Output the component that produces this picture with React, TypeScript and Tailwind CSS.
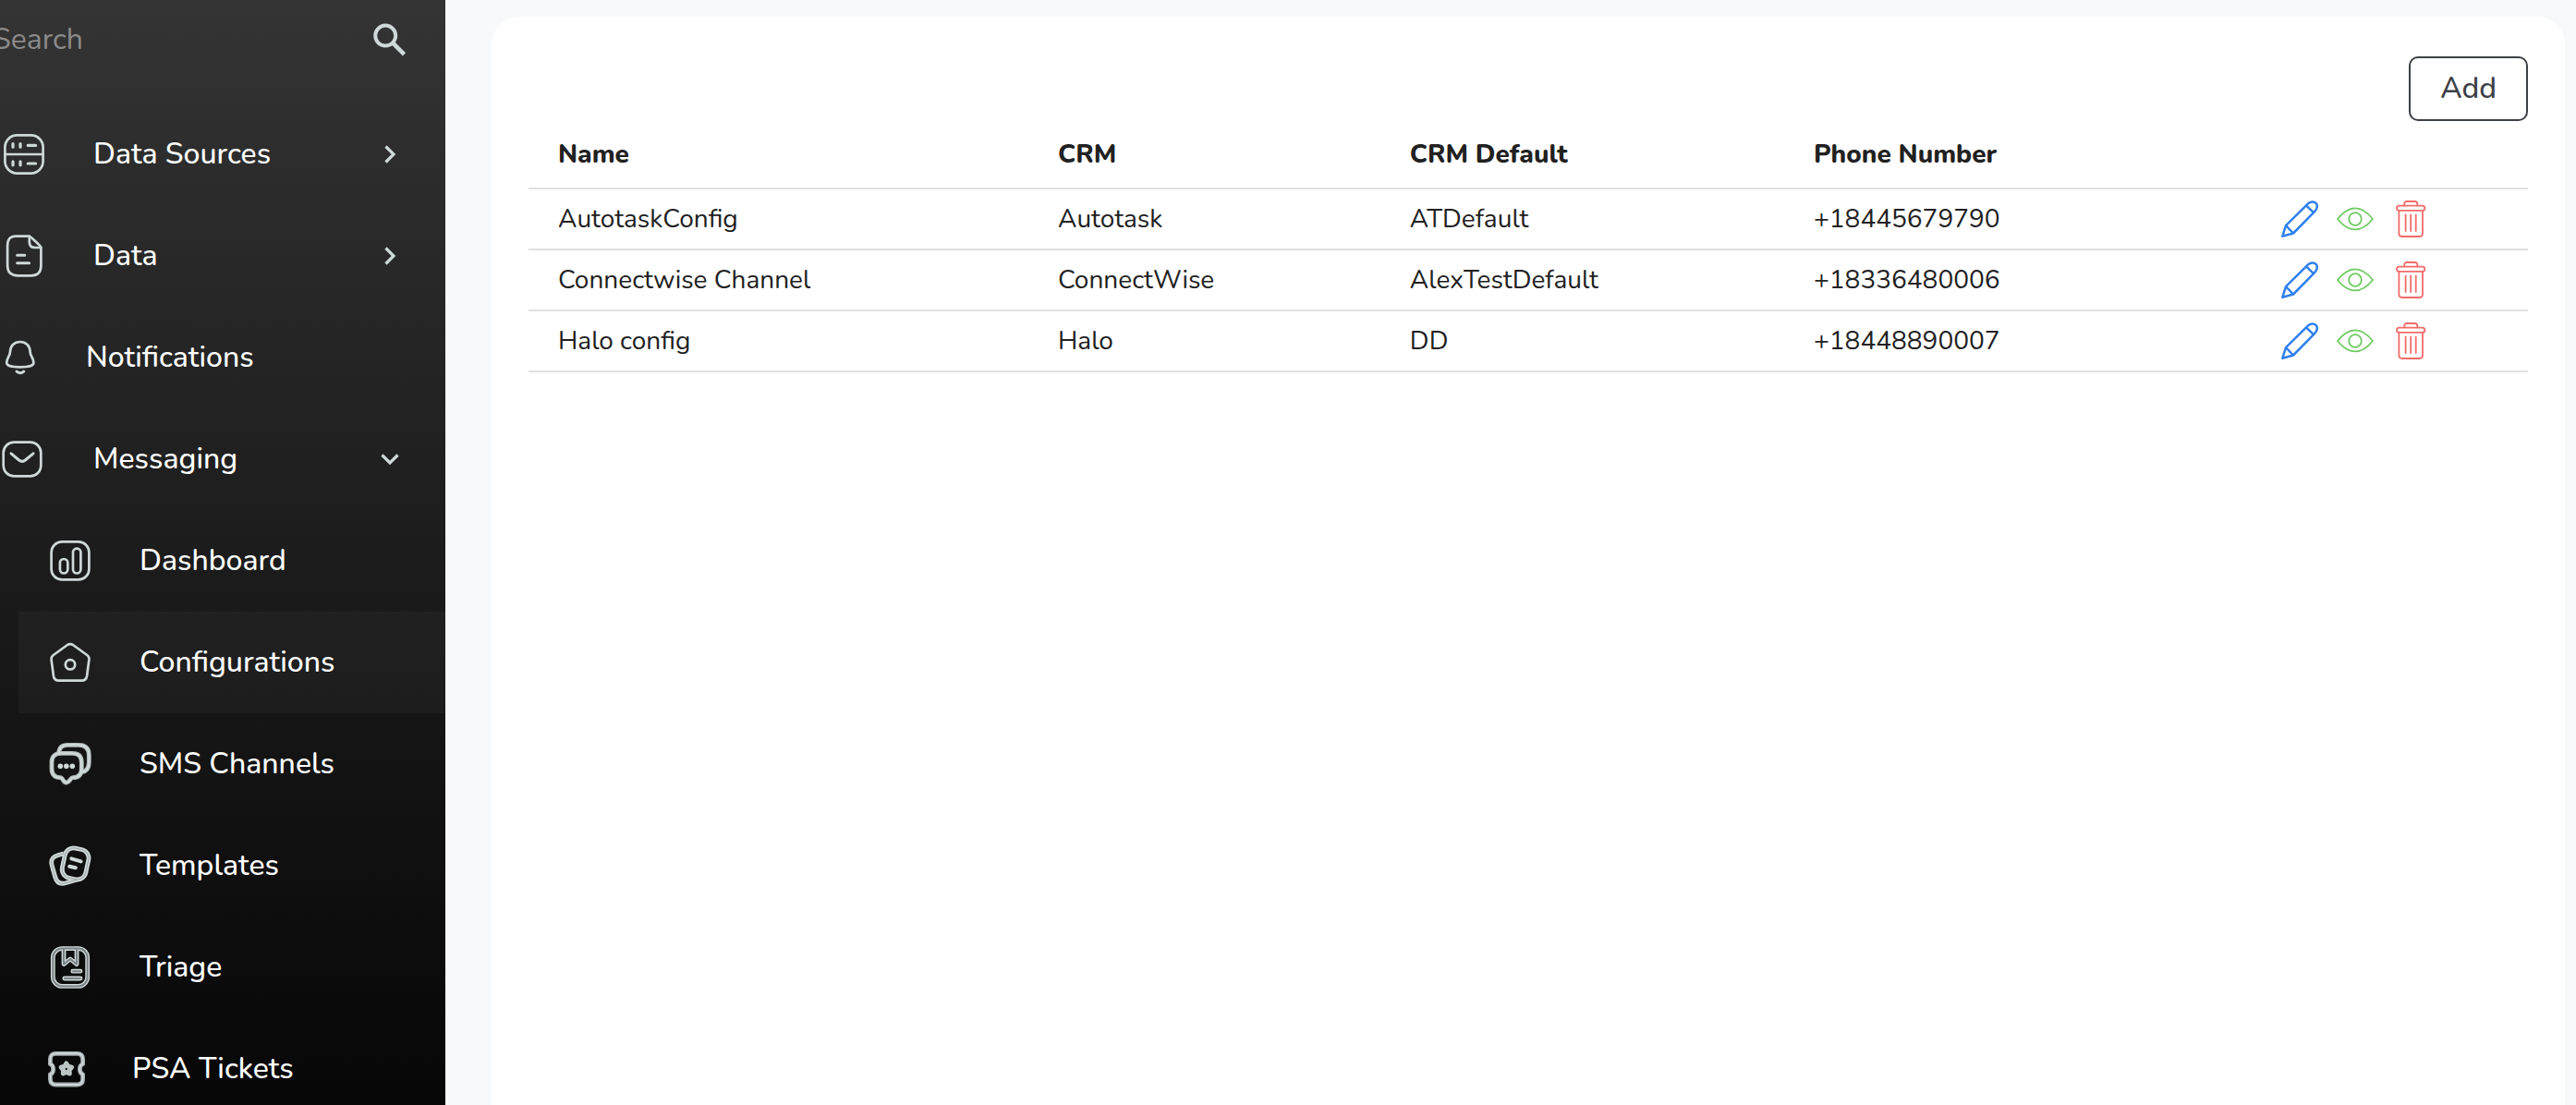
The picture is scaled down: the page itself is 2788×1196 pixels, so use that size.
import type { ReactNode } from "react";

const LIGHT = "#cfd8d8";

type IconProps = { size?: 40 | 48; children: ReactNode };

function NavIcon({ size = 48, children }: IconProps) {
  return (
    <svg
      width={size}
      height={size}
      viewBox={`0 0 ${size} ${size}`}
      fill="none"
      stroke={LIGHT}
      strokeWidth="2.7"
      strokeLinecap="round"
      strokeLinejoin="round"
      className="shrink-0"
      aria-hidden="true"
    >
      {children}
    </svg>
  );
}

/* A thick outline with a differently toned line running along its middle. */
function Inlaid({ width, core, tone, edge, children }: { width: number; core: number; tone: string; edge: string; children: ReactNode }) {
  return (
    <>
      <g strokeWidth={width} stroke={edge}>{children}</g>
      <g strokeWidth={core} stroke={tone}>{children}</g>
    </>
  );
}

const DataSourcesIcon = () => (
  <NavIcon>
    <rect x="3.4" y="3.4" width="41.2" height="41.2" rx="13" />
    <path d="M3.4 24H44.6" />
    <path strokeWidth="3.2" d="M12 12.6V16.2M20 12.6V16.2M28.2 14.4H36.6M12 31.9V35.8M20 31.9V35.8M28.2 34H36.6" />
  </NavIcon>
);

const DataIcon = () => (
  <NavIcon>
    <path d="M15 2.6H29.6C30.8 2.6 42.4 13.6 42.4 14.8V34.5C42.4 41.6 38.6 45.3 31.5 45.3H17C9.9 45.3 6.1 41.6 6.1 34.5V13C6.1 6 9 2.6 15 2.6Z" />
    <path d="M29.8 2.9V9C29.8 13 31.8 15 36 15H42.2" />
    <path strokeWidth="3" d="M16.6 23.2H24.8M16.6 31.8H29.6" />
  </NavIcon>
);

const BellIcon = () => (
  <NavIcon size={40}>
    <path d="M19.8 3C13.2 3 9.2 7.6 9 13.6C8.9 18.4 5.2 20.6 5.2 25.6C5.2 29.2 10 30.3 19.8 30.3S34.4 29.2 34.4 25.6C34.4 20.6 30.7 18.4 30.6 13.6C30.4 7.6 26.4 3 19.8 3Z" />
    <path strokeWidth="3" d="M16 35C18 37.2 21.800 37.2 23.8 35" />
  </NavIcon>
);

const MailIcon = () => (
  <NavIcon>
    <rect x="1.7" y="5.600" width="40.6" height="36.800" rx="11.5" />
    <path strokeWidth="3" d="M10 17.8L18.6 25C20.8 26.8 23.2 26.8 25.4 25L34 17.8" />
  </NavIcon>
);

const DashboardIcon = () => (
  <NavIcon>
    <rect x="3.6" y="3.4" width="40.800" height="41" rx="11.5" />
    <rect x="12.9" y="22" width="8.400" height="15.500" rx="4.200" />
    <rect x="27" y="10.600" width="8.400" height="26.900" rx="4.200" />
  </NavIcon>
);

const ConfigurationsIcon = () => (
  <NavIcon>
    <path d="M21 5Q24 3.1 27 5L42.2 16Q44.7 17.8 44.4 21L42.1 38.400Q41.2 43.6 36.400 43.6H11.6Q6.8 43.6 5.9 38.4L3.6 21Q3.3 17.8 5.8 16Z" />
    <circle cx="24" cy="26.300" r="5.200" />
  </NavIcon>
);

const SmsIcon = () => (
  <NavIcon>
    <Inlaid width={4.8} core={2.4} edge="#b2bbbb" tone={LIGHT}>
      <path strokeLinecap="butt" d="M11.6 12C12 6.2 15 3.3 21 3.3H33C40.5 3.3 44.3 7 44.3 14.5V22C44.3 28.500 42 31.8 36.6 32.6" />
      <path d="M14 12.4H26.5C33 12.4 36.3 15.8 36.3 22.2V29C36.3 35.3 33.2 38.7 27 38.7C24 38.7 23.4 44 19.800 44S16.2 38.7 13.2 38.7C7 38.7 4 35.3 4 29V22.2C4 15.8 7.5 12.4 14 12.4Z" />
    </Inlaid>
    <g fill={LIGHT} stroke="none">
      <circle cx="13.3" cy="26.3" r="2.8" />
      <circle cx="19.8" cy="26.3" r="2.8" />
      <circle cx="26.3" cy="26.3" r="2.8" />
    </g>
  </NavIcon>
);

const TemplatesIcon = () => (
  <NavIcon>
    <Inlaid width={4.8} core={1} edge={LIGHT} tone="#9ba3a5">
      <path strokeLinecap="butt" d="M17 10.9L10.5 12.8C4.5 14.6 2.6 18 4.2 23.8L7.8 36.5C9.5 42.4 13 44.4 19 42.8L31 39.3" />
      <rect x="16.6" y="5.4" width="26" height="33" rx="9.5" transform="rotate(12 29.6 21.9)" />
    </Inlaid>
    <path strokeWidth="4" d="M25.300 16.400L35.600 19.400M23.200 24.800L29.800 26.200" />
  </NavIcon>
);

const TriageIcon = () => (
  <NavIcon>
    <Inlaid width={4.8} core={2} edge={LIGHT} tone="#7c8386">
      <rect x="5.3" y="3.6" width="37.4" height="40.8" rx="10" />
      <path d="M17 4V20.6L24 15L31 20.6V4" />
      <path d="M26.8 28.2H35M17.8 36H35" />
    </Inlaid>
  </NavIcon>
);

const TicketIcon = () => (
  <NavIcon size={40}>
    <Inlaid width={4.8} core={2} edge="#a3abae" tone={LIGHT}>
      <path d="M2.4 14.8V9.5Q2.4 3.3 8.5 3.3H31.5Q37.6 3.3 37.6 9.5V14.8A4 5.6 0 0 0 37.6 25.8V31Q37.6 37 31.5 37H8.5Q2.4 37 2.4 31V25.8A4 5.6 0 0 0 2.4 14.8Z" />
    </Inlaid>
    <path strokeWidth="5" stroke="#bcc5c6" d="M19.8 14L21.800 17.200L25.500 18.100L23.100 21.100L23.300 24.900L19.800 23.500L16.300 24.900L16.500 21.100L14.100 18.100L17.800 17.200Z" />
  </NavIcon>
);

function SearchIcon() {
  return (
    <svg width="36" height="36" viewBox="0 0 36 36" fill="none" stroke={LIGHT} aria-hidden="true">
      <circle cx="13.2" cy="13.6" r="11" strokeWidth="4" />
      <path d="M21.8 22.2L33.5 33.9" strokeWidth="4.6" />
    </svg>
  );
}

function Chevron({ down }: { down?: boolean }) {
  return (
    <svg width="24" height="24" viewBox="0 0 24 24" fill="none" stroke={LIGHT} strokeWidth="3.2" aria-hidden="true">
      <path d={down ? "M3.5 7.5L12 16L20.5 7.5" : "M7.5 3.5L16 12L7.5 20.5"} />
    </svg>
  );
}

const PencilIcon = () => (
  <svg width="40" height="40" viewBox="0 0 40 40" fill="none" stroke="#2f80ed" strokeWidth="2.5" strokeLinejoin="round" aria-hidden="true">
    <path d="M1.3 38.7L5 27.2L28 4.3C31.2 .6 35.4 .8 37.5 2.9C39.4 4.8 39.5 8.8 36 12.2L13 35.5Z" />
    <path d="M5 27.2L13 35.5M27 5.4L35 13.2" />
  </svg>
);

const EyeIcon = () => (
  <svg width="40" height="40" viewBox="0 0 40 40" fill="none" stroke="#6fcb62" strokeWidth="1.8" strokeLinejoin="round" aria-hidden="true">
    <path d="M1 20C7.5 11.8 13.5 8.4 20 8.4S32.5 11.8 39 20C32.5 28.2 26.5 31.4 20 31.4S7.5 28.2 1 20Z" />
    <circle cx="20" cy="20" r="6.8" />
  </svg>
);

const TrashIcon = () => (
  <svg width="40" height="40" viewBox="0 0 40 40" fill="none" stroke="#f26b6b" strokeWidth="1.8" strokeLinejoin="round" strokeLinecap="round" aria-hidden="true">
    <path d="M13.3 5.4V3.6C13.3 1.8 14.4 1 16 1H24.6C26.2 1 27.3 1.8 27.3 3.6V5.4" />
    <rect x="5" y="5.7" width="30.4" height="5.2" rx="2.6" />
    <path d="M7.4 11V35.6C7.4 38 8.6 39 11 39H29.4C31.8 39 33 38 33 35.6V11" />
    <path d="M14.6 15.3V33.1M20.2 15.3V33.1M25.7 15.3V33.1" />
  </svg>
);

type Item = { label: string; icon: ReactNode; chevron?: "right" | "down"; sub?: boolean; active?: boolean };

const items: Item[] = [
  { label: "Data Sources", icon: <DataSourcesIcon />, chevron: "right" },
  { label: "Data", icon: <DataIcon />, chevron: "right" },
  { label: "Notifications", icon: <BellIcon /> },
  { label: "Messaging", icon: <MailIcon />, chevron: "down" },
  { label: "Dashboard", icon: <DashboardIcon />, sub: true },
  { label: "Configurations", icon: <ConfigurationsIcon />, sub: true, active: true },
  { label: "SMS Channels", icon: <SmsIcon />, sub: true },
  { label: "Templates", icon: <TemplatesIcon />, sub: true },
  { label: "Triage", icon: <TriageIcon />, sub: true },
  { label: "PSA Tickets", icon: <TicketIcon />, sub: true },
];

function NavItem({ item }: { item: Item }) {
  return (
    <li className={item.sub ? "pl-5" : ""}>
      <a
        href="#"
        aria-current={item.active ? "page" : undefined}
        className={`flex h-[110px] items-center gap-[51px] pr-12 ${item.sub ? "pl-8" : "pl-[2px]"} ${item.active ? "bg-white/[0.03]" : ""}`}
      >
        {item.icon}
        <span className="grow whitespace-nowrap">{item.label}</span>
        {item.chevron && <Chevron down={item.chevron === "down"} />}
      </a>
    </li>
  );
}

const rows = [
  { name: "AutotaskConfig", crm: "Autotask", fallback: "ATDefault", phone: "+18445679790" },
  { name: "Connectwise Channel", crm: "ConnectWise", fallback: "AlexTestDefault", phone: "+18336480006" },
  { name: "Halo config", crm: "Halo", fallback: "DD", phone: "+18448890007" },
];

export default function App() {
  return (
    <div className="flex h-screen overflow-hidden bg-[#f8f9fb] font-['Nunito','Open_Sans',sans-serif] text-[#212121]">
      <aside className="w-[482px] shrink-0 overflow-hidden bg-linear-to-b from-[#343434] to-[#070707] text-[32px] font-medium text-white">
        <form role="search" className="mb-[26px] -ml-2 flex h-[86px] items-center justify-between pr-[42px]">
          <input
            type="search"
            aria-label="Search"
            placeholder="Search"
            className="min-w-0 grow bg-transparent font-normal outline-none placeholder:text-[#8a8a8a]"
          />
          <button type="button" aria-label="Search">
            <SearchIcon />
          </button>
        </form>
        <nav>
          <ul>
            {items.map((item) => (
              <NavItem key={item.label} item={item} />
            ))}
          </ul>
        </nav>
      </aside>

      <main className="flex min-w-0 grow flex-col pt-[18px] pr-3 pl-[50px]">
        <section className="grow rounded-t-[30px] bg-white px-10 pt-[43px]">
          <div className="flex justify-end">
            <button
              type="button"
              className="h-[70px] rounded-[10px] border-2 border-[#3d4147] px-8 text-[32px] leading-none font-medium text-[#3d4147]"
            >
              Add
            </button>
          </div>
          <table className="w-full table-fixed border-collapse text-left text-[28px] leading-8">
            <thead>
              <tr className="h-[73px] border-b-2 border-[#e0e0e0]">
                <th className="w-[25%] px-8 font-extrabold">Name</th>
                <th className="w-[17.6%] px-8 font-extrabold">CRM</th>
                <th className="w-[20.2%] px-8 font-extrabold">CRM Default</th>
                <th className="w-[23.4%] px-8 font-extrabold">Phone Number</th>
                <th className="px-8" aria-label="Actions" />
              </tr>
            </thead>
            <tbody>
              {rows.map((row) => (
                <tr key={row.name} className="h-[66px] border-b-2 border-[#e0e0e0]">
                  <td className="px-8">{row.name}</td>
                  <td className="px-8">{row.crm}</td>
                  <td className="px-8">{row.fallback}</td>
                  <td className="px-8">{row.phone}</td>
                  <td className="px-8">
                    <div className="flex gap-5">
                      <button type="button" aria-label={`Edit ${row.name}`}>
                        <PencilIcon />
                      </button>
                      <button type="button" aria-label={`View ${row.name}`}>
                        <EyeIcon />
                      </button>
                      <button type="button" aria-label={`Delete ${row.name}`}>
                        <TrashIcon />
                      </button>
                    </div>
                  </td>
                </tr>
              ))}
            </tbody>
          </table>
        </section>
      </main>
    </div>
  );
}
